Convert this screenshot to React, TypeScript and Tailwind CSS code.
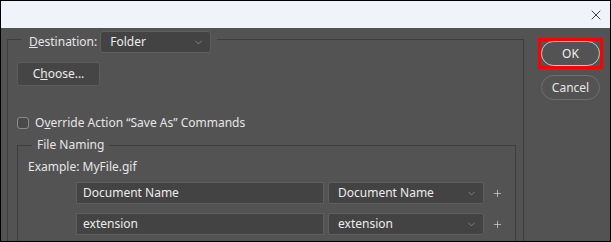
import { ChevronDown, X, Plus } from 'lucide-react';

const font = { fontFamily: '"Noto Sans", "Liberation Sans", sans-serif' };

const Select = ({ label, width }: { label: string; width: string }) => (
  <div
    className={`${width} h-[22px] flex items-center justify-between pl-[9px] pr-[6px] bg-[#434343] border border-[#5f5f5f] rounded-[3px] text-[12px] text-[#ececec]`}
  >
    <span>{label}</span>
    <ChevronDown className="h-[11px] w-[11px] text-[#9a9a9a]" strokeWidth={1.5} />
  </div>
);

const NameRow = ({ value, option }: { value: string; option: string }) => (
  <div className="flex items-center ml-[58px]">
    <div className="w-[248px] h-[22px] flex items-center pl-[6px] bg-[#434343] border border-[#5f5f5f] text-[12px] text-[#ececec]">
      {value}
    </div>
    <div className="ml-[4px]">
      <Select label={option} width="w-[156px]" />
    </div>
    <Plus className="ml-[8px] h-[11px] w-[11px] text-[#d8d8d8]" strokeWidth={1.5} />
  </div>
);

const App = () => {
  return (
    <div
      className="w-[611px] h-[242px] border border-black flex flex-col overflow-hidden bg-[#535353] text-[#e6e6e6] text-[12px]"
      style={font}
    >
      {/* Title bar */}
      <div className="h-[27px] bg-[#f0f3f9] flex items-center justify-end pr-[6px]">
        <X className="h-[16px] w-[16px] text-[#222222]" strokeWidth={1.3} />
      </div>

      <div className="flex flex-1">
        {/* Destination group */}
        <div className="ml-[6px] mt-[11px] w-[517px] border-t border-x border-[#3e3e3e] flex flex-col">
          <div className="-mt-[9px] ml-[14px] self-start flex items-center bg-[#535353] pl-[7px] pr-[6px] gap-[3px] h-[22px]">
            <span>
              <span className="underline">D</span>estination:
            </span>
            <Select label="Folder" width="w-[111px]" />
          </div>

          <button className="ml-[9px] mt-[9px] w-[83px] h-[24px] bg-[#454545] border border-[#5c5c5c] rounded-[3px] text-[#ececec]">
            C<span className="underline">h</span>oose...
          </button>

          <label className="ml-[9px] mt-[29px] h-[16px] flex items-center gap-[6px]">
            <span className="w-[12px] h-[12px] rounded-[3px] border border-[#8a8a8a] bg-[#4a4a4a]" />
            <span>
              O<span className="underline">v</span>erride Action “Save As” Commands
            </span>
          </label>

          {/* File Naming group */}
          <div className="ml-[9px] mr-[7px] mt-[14px] flex-1 border-t border-x border-[#3e3e3e] flex flex-col">
            <div className="-mt-[9px] ml-[14px] self-start h-[16px] flex items-center bg-[#535353] px-[5px]">
              File Naming
            </div>
            <div className="ml-[10px] mt-[6px] h-[16px] flex items-center">Example: MyFile.gif</div>
            <div className="mt-[7px]">
              <NameRow value="Document Name" option="Document Name" />
            </div>
            <div className="mt-[9px]">
              <NameRow value="extension" option="extension" />
            </div>
          </div>
        </div>

        {/* Buttons */}
        <div className="ml-[14px] mt-[10px] flex flex-col">
          <div className="w-[65px] h-[31px] border-[3px] border-[#ff0000] flex items-center justify-center">
            <button className="w-[59px] h-[25px] rounded-full border border-[#c4c4c4] text-[#f0f0f0]">
              OK
            </button>
          </div>
          <button className="mt-[6px] ml-[3px] w-[59px] h-[25px] rounded-full border border-[#6e6e6e] text-[#e6e6e6]">
            Cancel
          </button>
        </div>
      </div>
    </div>
  );
};

export default App;
